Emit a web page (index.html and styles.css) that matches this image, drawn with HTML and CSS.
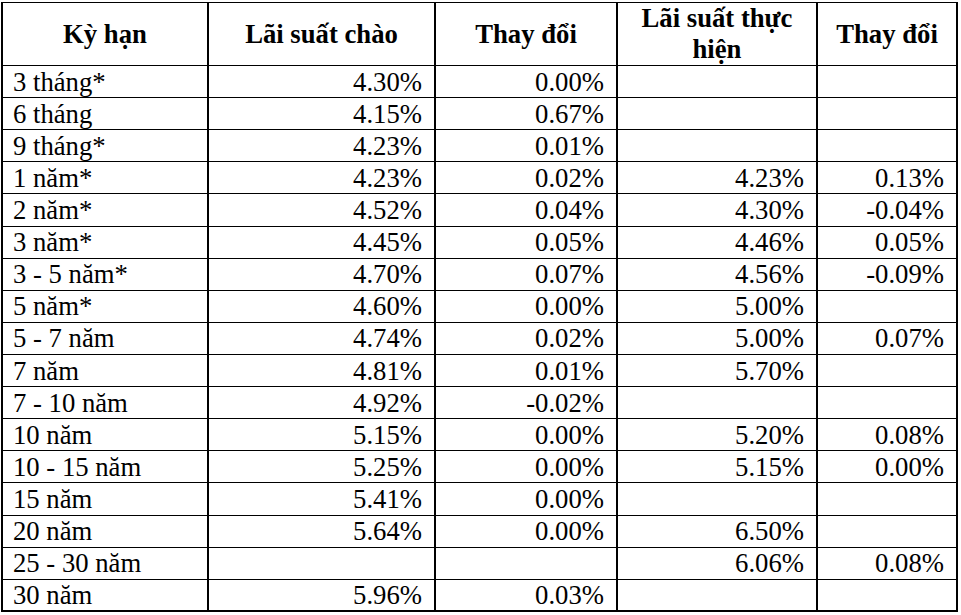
FILE: index.html
```html
<!DOCTYPE html>
<html lang="vi">
<head>
<meta charset="utf-8">
<link rel="stylesheet" href="styles.css">
</head>
<body>
<div class="wrap">
<table class="rates">
<colgroup>
<col class="c1"><col class="c2"><col class="c3"><col class="c4"><col class="c5">
</colgroup>
<thead>
<tr><th>Kỳ hạn</th><th>Lãi suất chào</th><th>Thay đổi</th><th>Lãi suất thực hiện</th><th>Thay đổi</th></tr>
</thead>
<tbody>
<tr><td class="term">3 tháng*</td><td>4.30%</td><td>0.00%</td><td></td><td></td></tr>
<tr><td class="term">6 tháng</td><td>4.15%</td><td>0.67%</td><td></td><td></td></tr>
<tr><td class="term">9 tháng*</td><td>4.23%</td><td>0.01%</td><td></td><td></td></tr>
<tr><td class="term">1 năm*</td><td>4.23%</td><td>0.02%</td><td>4.23%</td><td>0.13%</td></tr>
<tr><td class="term">2 năm*</td><td>4.52%</td><td>0.04%</td><td>4.30%</td><td>-0.04%</td></tr>
<tr><td class="term">3 năm*</td><td>4.45%</td><td>0.05%</td><td>4.46%</td><td>0.05%</td></tr>
<tr><td class="term">3 - 5 năm*</td><td>4.70%</td><td>0.07%</td><td>4.56%</td><td>-0.09%</td></tr>
<tr><td class="term">5 năm*</td><td>4.60%</td><td>0.00%</td><td>5.00%</td><td></td></tr>
<tr><td class="term">5 - 7 năm</td><td>4.74%</td><td>0.02%</td><td>5.00%</td><td>0.07%</td></tr>
<tr><td class="term">7 năm</td><td>4.81%</td><td>0.01%</td><td>5.70%</td><td></td></tr>
<tr><td class="term">7 - 10 năm</td><td>4.92%</td><td>-0.02%</td><td></td><td></td></tr>
<tr><td class="term">10 năm</td><td>5.15%</td><td>0.00%</td><td>5.20%</td><td>0.08%</td></tr>
<tr><td class="term">10 - 15 năm</td><td>5.25%</td><td>0.00%</td><td>5.15%</td><td>0.00%</td></tr>
<tr><td class="term">15 năm</td><td>5.41%</td><td>0.00%</td><td></td><td></td></tr>
<tr><td class="term">20 năm</td><td>5.64%</td><td>0.00%</td><td>6.50%</td><td></td></tr>
<tr><td class="term">25 - 30 năm</td><td></td><td></td><td>6.06%</td><td>0.08%</td></tr>
<tr><td class="term">30 năm</td><td>5.96%</td><td>0.03%</td><td></td><td></td></tr>
</tbody>
</table>
</div>
</body>
</html>
```
FILE: styles.css
```css
html, body {
  margin: 0;
  padding: 0;
  background: #fff;
}
body {
  font-family: "Liberation Serif", serif;
  font-size: 26.7px;
  color: #000;
}
.wrap {
  padding: 2px 0 0 1px;
}
.rates {
  table-layout: fixed;
  width: 957px;
  border-collapse: separate;
  border-spacing: 0;
  border-left: 2px solid #000;
  border-top: 1px solid #000;
  font-family: "Liberation Serif", serif;
  font-size: 26.7px;
}
.c1 { width: 206px; }
.c2 { width: 227px; }
.c3 { width: 182px; }
.c4 { width: 200px; }
.c5 { width: 140px; }
.rates th,
.rates td {
  box-sizing: border-box;
  border-right: 2px solid #000;
  border-bottom: 1px solid #000;
  padding: 0;
  vertical-align: middle;
  white-space: nowrap;
  font-family: "Liberation Serif", serif;
}
.rates th {
  height: 63px;
  font-weight: bold;
  text-align: center;
  white-space: normal;
  line-height: 30.7px;
  padding: 0 6px;
}
.rates td {
  height: 32.12px;
  text-align: right;
  padding-right: 12px;
  line-height: 30px;
}
.rates td.term {
  text-align: left;
  padding-left: 10px;
  padding-right: 0;
}
.rates tbody tr:last-child td {
  border-bottom-width: 2px;
}
```
